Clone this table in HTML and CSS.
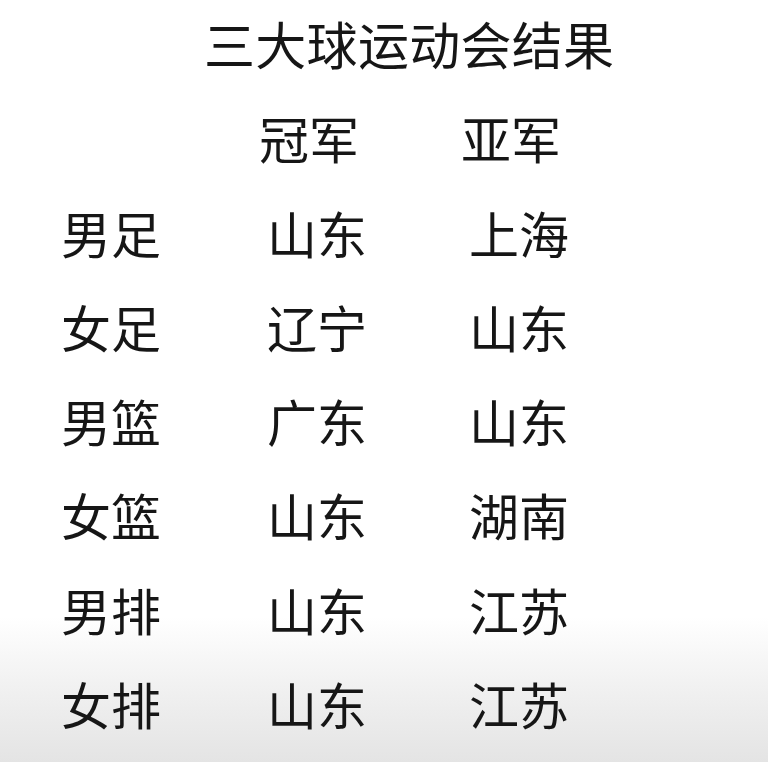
FILE: index.html
```html
<!DOCTYPE html>
<html lang="zh-CN">
<head>
<meta charset="utf-8">
<link rel="stylesheet" href="styles.css">
</head>
<body>
<div class="page">
  <h1 class="title">三大球运动会结果</h1>
  <div class="table">
    <div class="cell"></div>
    <div class="cell head">冠军</div>
    <div class="cell head">亚军</div>

    <div class="cell">男足</div>
    <div class="cell">山东</div>
    <div class="cell">上海</div>

    <div class="cell">女足</div>
    <div class="cell">辽宁</div>
    <div class="cell">山东</div>

    <div class="cell">男篮</div>
    <div class="cell">广东</div>
    <div class="cell">山东</div>

    <div class="cell">女篮</div>
    <div class="cell">山东</div>
    <div class="cell">湖南</div>

    <div class="cell">男排</div>
    <div class="cell">山东</div>
    <div class="cell">江苏</div>

    <div class="cell">女排</div>
    <div class="cell">山东</div>
    <div class="cell">江苏</div>
  </div>
</div>
</body>
</html>
```

FILE: styles.css
```css
html, body {
  margin: 0;
  padding: 0;
  height: 100%;
}

body {
  width: 768px;
  height: 762px;
  overflow: hidden;
  background: linear-gradient(to bottom, #ffffff 0%, #ffffff 81%, #f1f1f1 90%, #e4e4e4 100%);
  font-family: "Noto Sans CJK SC", "Noto Sans", sans-serif;
  color: #161616;
}

.page {
  margin-top: -4px;
}

.title {
  margin: 0;
  padding-left: 204px;
  font-size: 51px;
  font-weight: 400;
  line-height: 94.3px;
  letter-spacing: 0.3px;
}

.table {
  display: grid;
  grid-template-columns: 206px 202px auto;
  padding-left: 61px;
}

.cell {
  font-size: 50px;
  font-weight: 400;
  line-height: 94.3px;
  height: 94.3px;
  white-space: nowrap;
}

.head {
  margin-left: -8px;
}
```
